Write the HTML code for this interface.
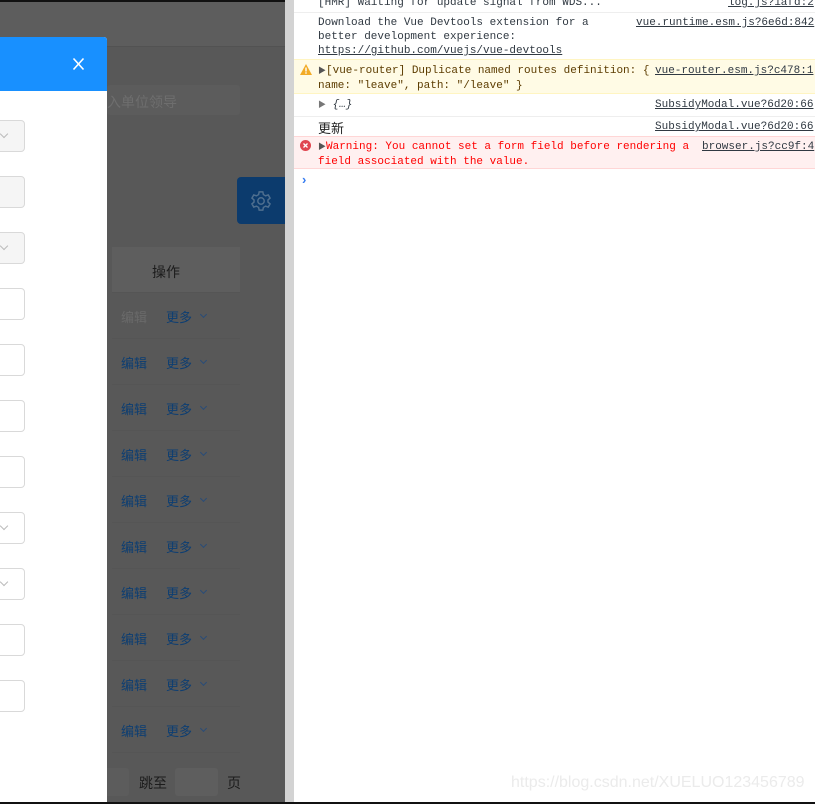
<!DOCTYPE html>
<html><head><meta charset="utf-8"><style>
*{margin:0;padding:0;box-sizing:border-box}
body{width:815px;height:804px;overflow:hidden;position:relative;background:#fff;font-family:"Liberation Sans","Noto Sans CJK SC",sans-serif}
.a{position:absolute}
.ov{left:0;top:0;width:285px;height:804px;background:#585858}
.mono{font-family:"Liberation Mono","Noto Sans CJK SC",monospace;font-size:11px;line-height:14px;color:#303942;white-space:pre}
.lnk{text-decoration:underline;color:#303942}
.inp{left:-10px;width:35px;height:32px;border:1px solid #d9d9d9;border-radius:4px;background:#fff}
.dis{background:#f5f5f5}
.arr{position:absolute;left:10px;top:10px;width:6px;height:6px;border-right:1px solid #bbb;border-bottom:1px solid #bbb;transform:rotate(45deg)}
.row{left:112px;width:128px;height:46px;border-bottom:1px solid #555;font-size:13px}
.row span{position:absolute;top:14px}
.ed{left:9px;color:#0d3e72}
.mo{left:54px;color:#0d3e72}
.chev{position:absolute;left:89px;top:19px;width:5px;height:5px;border-right:1px solid #294c78;border-bottom:1px solid #294c78;transform:rotate(45deg)}
</style></head><body>
<div class="a ov"></div>
<div class="a" style="left:0;top:0;width:285px;height:47px;background:#5d5d5d;border-bottom:1px solid #525252"></div>
<div class="a" style="left:0;top:0;width:294px;height:2px;background:#111"></div>
<div class="a" style="left:107px;top:85px;width:133px;height:30px;background:#5c5c5c;border-radius:3px"></div>
<div class="a" style="left:107px;top:92px;font-size:14px;color:#6e6e6e">入单位领导</div>
<div class="a" style="left:237px;top:177px;width:48px;height:47px;background:#0c3b6d;border-radius:4px 0 0 4px"></div>
<svg class="a" style="left:250px;top:190px" width="22" height="22" viewBox="0 0 24 24" fill="none" stroke="#4f6f8f" stroke-width="1.6"><circle cx="12" cy="12" r="3.5"/><path d="M10 2h4l.6 3 2.4 1.4 2.9-1 2 3.4-2.3 2v2.4l2.3 2-2 3.4-2.9-1-2.4 1.4-.6 3h-4l-.6-3-2.4-1.4-2.9 1-2-3.4 2.3-2v-2.4l-2.3-2 2-3.4 2.9 1L9.4 5z"/></svg>
<div class="a" style="left:112px;top:247px;width:128px;height:46px;background:#5e5e5e;border-bottom:1px solid #555"></div>
<div class="a" style="left:152px;top:262px;font-size:14px;color:#1c1c1c">操作</div>
<div class="a row" style="top:293px"><span class="ed" style="color:#6a6a6a">编辑</span><span class="mo">更多</span><i class="chev"></i></div>
<div class="a row" style="top:339px"><span class="ed">编辑</span><span class="mo">更多</span><i class="chev"></i></div>
<div class="a row" style="top:385px"><span class="ed">编辑</span><span class="mo">更多</span><i class="chev"></i></div>
<div class="a row" style="top:431px"><span class="ed">编辑</span><span class="mo">更多</span><i class="chev"></i></div>
<div class="a row" style="top:477px"><span class="ed">编辑</span><span class="mo">更多</span><i class="chev"></i></div>
<div class="a row" style="top:523px"><span class="ed">编辑</span><span class="mo">更多</span><i class="chev"></i></div>
<div class="a row" style="top:569px"><span class="ed">编辑</span><span class="mo">更多</span><i class="chev"></i></div>
<div class="a row" style="top:615px"><span class="ed">编辑</span><span class="mo">更多</span><i class="chev"></i></div>
<div class="a row" style="top:661px"><span class="ed">编辑</span><span class="mo">更多</span><i class="chev"></i></div>
<div class="a row" style="top:707px"><span class="ed">编辑</span><span class="mo">更多</span><i class="chev"></i></div>
<div class="a" style="left:100px;top:768px;width:29px;height:28px;background:#5c5c5c;border-radius:3px"></div>
<div class="a" style="left:139px;top:773px;font-size:14px;color:#1c1c1c">跳至</div>
<div class="a" style="left:175px;top:768px;width:43px;height:28px;background:#5e5e5e;border-radius:3px"></div>
<div class="a" style="left:227px;top:773px;font-size:14px;color:#1c1c1c">页</div>
<div class="a" style="left:0;top:37px;width:107px;height:767px;background:#fff;border-radius:0 3px 0 0"></div>
<div class="a" style="left:0;top:37px;width:107px;height:54px;background:#1890ff;border-radius:0 3px 0 0"></div>
<svg class="a" style="left:72px;top:57px" width="13" height="14"><path d="M1.5 1.5L11.5 12.5M11.5 1.5L1.5 12.5" stroke="#fff" stroke-width="1.6"/></svg>
<div class="a inp dis" style="top:120px"><i class="arr"></i></div>
<div class="a inp dis" style="top:176px"></div>
<div class="a inp dis" style="top:232px"><i class="arr"></i></div>
<div class="a inp" style="top:288px"></div>
<div class="a inp" style="top:344px"></div>
<div class="a inp" style="top:400px"></div>
<div class="a inp" style="top:456px"></div>
<div class="a inp" style="top:512px"><i class="arr"></i></div>
<div class="a inp" style="top:568px"><i class="arr"></i></div>
<div class="a inp" style="top:624px"></div>
<div class="a inp" style="top:680px"></div>
<div class="a" style="left:285px;top:0;width:9px;height:804px;background:#d3d3d3"></div>
<div class="a mono" style="left:318px;top:-4px">[HMR] Waiting for update signal from WDS...</div>
<div class="a mono lnk" style="left:728px;top:-4px">log.js?1afd:2</div>
<div class="a" style="left:294px;top:12px;width:521px;height:1px;background:#eee"></div>
<div class="a mono" style="left:318px;top:16px">Download the Vue Devtools extension for a
better development experience:
<span class="lnk">https://github.com/vuejs/vue-devtools</span></div>
<div class="a mono lnk" style="left:636px;top:16px">vue.runtime.esm.js?6e6d:842</div>
<div class="a" style="left:294px;top:59px;width:521px;height:35px;background:#fffbe5;border-top:1px solid #fff5c2;border-bottom:1px solid #fff5c2"></div>
<svg class="a" style="left:300px;top:64px" width="12" height="11"><path d="M6 0L12 11H0z" fill="#f2ab26"/><rect x="5.3" y="3.5" width="1.4" height="4" fill="#fff"/><rect x="5.3" y="8.3" width="1.4" height="1.4" fill="#fff"/></svg>
<div class="a mono" style="left:318px;top:64px;color:#5c3c00"><span style="font-size:8px;color:#555">▶</span>[vue-router] Duplicate named routes definition: {
name: "leave", path: "/leave" }</div>
<div class="a mono lnk" style="left:655px;top:64px;background:#fffbe5">vue-router.esm.js?c478:1</div>
<div class="a mono" style="left:318px;top:98px"><span style="font-size:8px;color:#777">▶</span> <i>{…}</i></div>
<div class="a mono lnk" style="left:655px;top:98px">SubsidyModal.vue?6d20:66</div>
<div class="a" style="left:294px;top:116px;width:521px;height:1px;background:#eee"></div>
<div class="a" style="left:318px;top:118px;font-size:13px;color:#222">更新</div>
<div class="a mono lnk" style="left:655px;top:120px">SubsidyModal.vue?6d20:66</div>
<div class="a" style="left:294px;top:136px;width:521px;height:33px;background:#fff0f0;border-top:1px solid #ffd6d6;border-bottom:1px solid #ffd6d6"></div>
<svg class="a" style="left:300px;top:140px" width="11" height="11"><circle cx="5.5" cy="5.5" r="5.5" fill="#e0454f"/><path d="M3.5 3.5l4 4M7.5 3.5l-4 4" stroke="#fff" stroke-width="1.3"/></svg>
<div class="a mono" style="left:318px;top:140px;color:#f00"><span style="font-size:8px;color:#555">▶</span>Warning: You cannot set a form field before rendering a
field associated with the value.</div>
<div class="a mono lnk" style="left:702px;top:140px;background:#fff0f0">browser.js?cc9f:4</div>
<div class="a" style="left:302px;top:172px;color:#367cf1;font-size:13px;font-weight:bold">›</div>
<div class="a" style="left:511px;top:774px;font-size:16px;color:#ebebeb;letter-spacing:0px">https://blog.csdn.net/XUELUO123456789</div>
<div class="a" style="left:0;top:802px;width:815px;height:2px;background:#111"></div>
</body></html>
